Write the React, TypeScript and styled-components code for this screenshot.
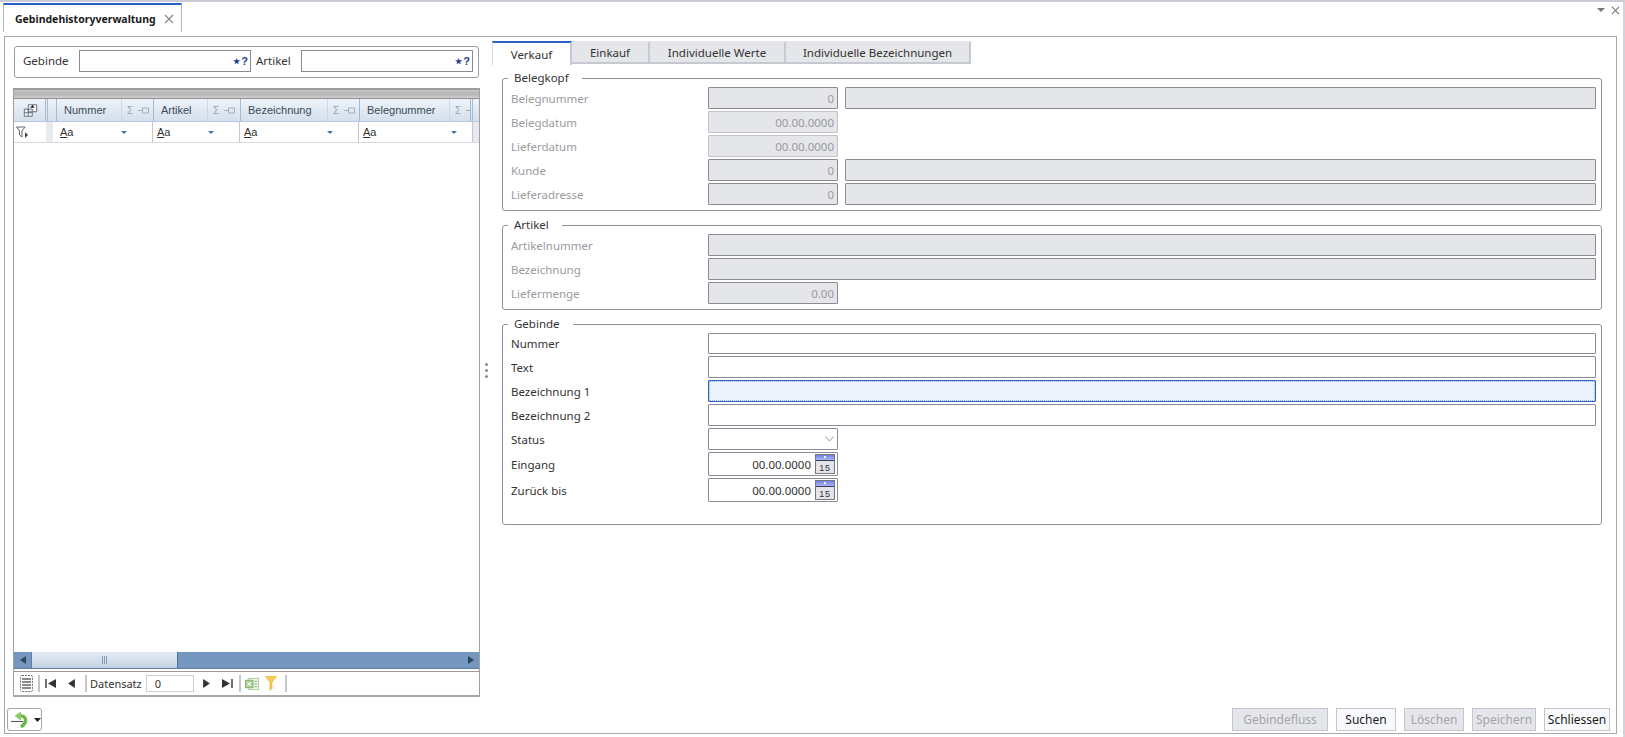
import React, { FC } from "react";
import styled, { createGlobalStyle } from "styled-components";

const GlobalStyle = createGlobalStyle`
	html, body {
		margin: 0;
		padding: 0;
		background: #fff;
	}
	* {
		box-sizing: border-box;
	}
`;

const uiFont = `"Noto Sans", "Open Sans", "Liberation Sans", sans-serif`;

const Window = styled.div`
	width: 1625px;
	height: 737px;
	display: flex;
	flex-direction: column;
	overflow: hidden;
	background: #fff;
	border-top: 2px solid #c9ccd6;
	border-right: 2px solid #d4d5da;
	font-family: ${uiFont};
	font-size: 11.5px;
	color: #333;
`;

const TabStrip = styled.div`
	height: 34px;
	flex: none;
	display: flex;
	justify-content: space-between;
	padding: 1px 0 0 3px;
`;

const DocTab = styled.div`
	width: 179px;
	height: 29px;
	display: flex;
	align-items: center;
	gap: 8px;
	padding-left: 11px;
	border: 1px solid #b5b8c0;
	border-top: 2px solid #2a5fc4;
	border-bottom: none;
	font-weight: 700;
	font-size: 10.5px;
	color: #1a1a1a;
`;

const WindowControls = styled.div`
	display: flex;
	align-items: center;
	height: 12px;
	gap: 6px;
	padding-right: 3px;
	margin-top: 1px;
`;

const Frame = styled.div`
	flex: none;
	height: 698px;
	margin: 0 6px 0 4px;
	border: 1px solid #a8a9ad;
	display: flex;
	flex-direction: column;
`;

const Main = styled.div`
	height: 667px;
	flex: none;
	display: flex;
`;

const LeftPane = styled.div`
	width: 475px;
	flex: none;
	padding: 9px 0 0 8px;
	display: flex;
	flex-direction: column;
	align-items: flex-start;
`;

const SearchBox = styled.div`
	width: 465px;
	height: 32px;
	margin-left: 1px;
	padding: 3px 5px 0 8px;
	display: flex;
	border: 1px solid #9b9ca5;
	border-radius: 3px;
	color: #333;
`;

const SearchLabel = styled.label<{ $width: number; $indent?: number }>`
	width: ${(p) => p.$width}px;
	flex: none;
	padding-left: ${(p) => p.$indent ?? 0}px;
	line-height: 22px;
`;

const SearchInput = styled.div`
	width: 172px;
	height: 22px;
	flex: none;
	display: flex;
	align-items: center;
	justify-content: flex-end;
	gap: 1px;
	padding-right: 2px;
	border: 1px solid #8a8b96;
	color: #1d3f94;
	font-family: "Liberation Sans", sans-serif;
	font-weight: 700;
	font-size: 11px;

	span {
		font-size: 8px;
	}
`;

const Grid = styled.div`
	width: 467px;
	height: 609px;
	margin-top: 10px;
	display: flex;
	flex-direction: column;
	border: 1px solid #a0a0a0;
	border-top: 2px solid #9b9ba0;
	border-bottom: 2px solid #a8a8a8;
	font-family: "Liberation Sans", sans-serif;
	font-size: 11px;
`;

const GroupBand = styled.div`
	height: 9px;
	flex: none;
	background: linear-gradient(#c8c8c8, #b4b4b4 50%, #d0d0d0);
	border-bottom: 1px solid #8f8f8f;
`;

const HeaderRow = styled.div`
	height: 23px;
	flex: none;
	display: flex;
	background: linear-gradient(#eef3f9, #dfe8f2 55%, #d4e0ed);
	border-bottom: 1px solid #b5c7dc;
	overflow: hidden;
`;

const CornerCell = styled.div`
	width: 42px;
	flex: none;
	display: flex;
	align-items: center;
	padding-left: 9px;
`;

const CornerGrip = styled.span`
	width: 3px;
	height: 100%;
	flex: none;
	margin-left: 7px;
	border-left: 1px solid #a9bbd0;
	border-right: 1px solid #a9bbd0;
`;

const HeaderCell = styled.div<{ $width: number; $last?: boolean }>`
	width: ${(p) => p.$width}px;
	flex: none;
	display: flex;
	align-items: center;
	padding-left: 7px;
	border-left: 1px solid #a3bad3;
	border-right: ${(p) => (p.$last ? "3px double #a3bad3" : "none")};
	color: #3a4a55;
`;

const HeaderTitle = styled.span`
	flex: 1;
`;

const HeaderTools = styled.span<{ $width: number }>`
	width: ${(p) => p.$width}px;
	flex: none;
	height: 100%;
	display: flex;
	align-items: center;
	gap: 5px;
	padding-left: 5px;
	border-left: 1px solid #cbd8e6;
	color: #9aa6b2;
	font-size: 10px;
	overflow: hidden;
`;

const FilterRow = styled.div`
	height: 21px;
	flex: none;
	display: flex;
	border-bottom: 1px solid #d6d9dd;
`;

const FilterCorner = styled.div`
	width: 42px;
	flex: none;
	display: flex;
	align-items: center;
	padding-left: 2px;
	background: linear-gradient(90deg, #fff 32px, #e7ebf0 32px, #e7ebf0 39px, #fff 39px);
`;

const FilterCell = styled.div<{ $width: number; $gap: number }>`
	width: ${(p) => p.$width}px;
	flex: none;
	display: flex;
	align-items: center;
	justify-content: space-between;
	padding: 0 ${(p) => p.$gap}px 0 4px;
	border-right: 1px solid #c4c8cc;
	color: #333;
	font-size: 11px;

	u {
		text-underline-offset: 1px;
	}
`;

const FilterEnd = styled.div`
	flex: 1;
	background: #e7ebf0;
`;

const GridBody = styled.div`
	flex: 1;
`;

const ScrollBar = styled.div`
	height: 17px;
	flex: none;
	display: flex;
	background: #7597bf;
	border-bottom: 1px solid #5e7ea6;
`;

const ScrollEnd = styled.div`
	width: 17px;
	flex: none;
	display: flex;
	align-items: center;
	justify-content: center;
`;

const ScrollThumb = styled.div`
	width: 147px;
	flex: none;
	display: flex;
	align-items: center;
	justify-content: center;
	gap: 1px;
	background: linear-gradient(#e2eaf3, #d5e1ed 50%, #c2d2e3);
	border-left: 1px solid #5e7ea6;
	border-right: 1px solid #4f6f98;

	i {
		width: 1px;
		height: 8px;
		background: #8a9bb0;
	}
`;

const ScrollSpacer = styled.div`
	flex: 1;
`;

const NavBar = styled.div`
	flex: none;
	height: 24px;
	display: flex;
	align-items: center;
	padding-left: 6px;
	border-top: 1px solid #9c9c9c;
	margin-top: 2px;
	font-family: ${uiFont};
	font-size: 11px;
	color: #333;
`;

const NavSeparator = styled.div<{ $left?: number; $right?: number }>`
	width: 2px;
	height: 17px;
	flex: none;
	margin: 0 ${(p) => p.$right ?? 5}px 0 ${(p) => p.$left ?? 5}px;
	background: #c6c6c6;
`;

const NavButton = styled.div<{ $width: number }>`
	width: ${(p) => p.$width}px;
	flex: none;
	display: flex;
	align-items: center;
	justify-content: center;
`;

const NavInput = styled.div`
	width: 48px;
	height: 17px;
	flex: none;
	margin: 0 3px 0 4px;
	padding-left: 8px;
	line-height: 16px;
	border: 1px solid #cfcfcf;
`;

const Splitter = styled.div`
	width: 12px;
	flex: none;
	display: flex;
	flex-direction: column;
	align-items: center;
	justify-content: center;
	gap: 3px;
	padding-left: 1px;

	i {
		width: 3px;
		height: 3px;
		border-radius: 50%;
		background: #8b8b8b;
	}
`;

const RightPane = styled.div`
	flex: 1;
	padding: 4px 14px 0 0;
	min-width: 0;
`;

const TabBar = styled.div`
	display: flex;
	height: 24px;
	margin-bottom: 5px;
`;

const FormTab = styled.div<{ $width: number; $active?: boolean }>`
	width: ${(p) => p.$width}px;
	height: ${(p) => (p.$active ? 24 : 23)}px;
	flex: none;
	display: flex;
	align-items: center;
	justify-content: center;
	color: #333;
	background: ${(p) => (p.$active ? "#fff" : "#e5e6ea")};
	border-top: 2px solid ${(p) => (p.$active ? "#2a5fc4" : "#e5e6ea")};
	border-right: 2px solid #c6c9d1;
	border-bottom: ${(p) => (p.$active ? "none" : "2px solid #c6c9d1")};
	border-left: ${(p) => (p.$active ? "1px solid #d6d8dd" : "none")};
`;

const Group = styled.fieldset<{ $height: number }>`
	margin: 0 0 6px 10px;
	width: 1100px;
	height: ${(p) => p.$height}px;
	padding: 0 5px 0 8px;
	border: 1px solid #8f919b;
	border-radius: 3px;
	min-width: 0;
`;

const GroupTitle = styled.legend`
	padding: 0 13px 0 6px;
	margin-left: -3px;
	line-height: 16px;
	color: #333;
`;

const Rows = styled.div`
	display: flex;
	flex-direction: column;
	padding-top: 1px;
`;

const Row = styled.div<{ $height?: number }>`
	display: flex;
	align-items: center;
	height: ${(p) => p.$height ?? 22}px;
	margin-bottom: 2px;
`;

const FieldLabel = styled.label<{ $disabled?: boolean }>`
	width: 197px;
	flex: none;
	color: ${(p) => (p.$disabled ? "#9a9aa0" : "#333")};
`;

const Field = styled.div<{ $disabled?: boolean; $soft?: boolean; $wide?: boolean; $focus?: boolean }>`
	height: 100%;
	flex: ${(p) => (p.$wide ? "1" : "none")};
	width: ${(p) => (p.$wide ? "auto" : "130px")};
	margin-right: ${(p) => (p.$wide ? "0" : "7px")};
	display: flex;
	align-items: center;
	justify-content: flex-end;
	padding-right: 3px;
	background: ${(p) => (p.$disabled ? "#e5e6ea" : p.$focus ? "#edf3fc" : "#fff")};
	border: 1px solid ${(p) => (p.$focus ? "#2a62c8" : p.$soft ? "#c2c3c9" : "#8a8b96")};
	border-radius: 1px;
	color: ${(p) => (p.$disabled ? "#9a9aa0" : "#333")};
	outline: ${(p) => (p.$focus ? "1px dotted #9fb0cc" : "none")};
	outline-offset: -2px;
`;

const CalendarButton = styled.span`
	display: flex;
	margin-left: 4px;
	margin-right: -1px;
`;

const Footer = styled.div`
	flex: 1;
	display: flex;
	align-items: flex-start;
	justify-content: space-between;
	padding: 4px 6px 0 2px;
`;

const BackButton = styled.div`
	width: 35px;
	height: 23px;
	display: flex;
	align-items: center;
	gap: 4px;
	padding-left: 3px;
	border: 1px solid #a5a5aa;
	border-radius: 3px;
`;

const ButtonBar = styled.div`
	display: flex;
	gap: 8px;
`;

const ActionButton = styled.button<{ $width: number }>`
	width: ${(p) => p.$width}px;
	height: 23px;
	padding: 0;
	font-family: ${uiFont};
	font-size: 12px;
	color: #1a1a1a;
	background: #f8f9fc;
	border: 1px solid #c3c6cf;

	&:disabled {
		color: #a3a4ab;
		background: #e5e6ea;
	}
`;

const Close: FC<{ size: number; color: string }> = ({ size, color }) => (
	<svg width={size} height={size} viewBox="0 0 10 10">
		<path d="M1 1 L9 9 M9 1 L1 9" stroke={color} strokeWidth="1.2" fill="none" />
	</svg>
);

const Triangle: FC<{ dir: "left" | "right"; color?: string; size?: number }> = ({ dir, color = "#333", size = 8 }) => (
	<svg width={size} height={size} viewBox="0 0 8 8">
		<path d={dir === "left" ? "M7 0 V8 L1 4 Z" : "M1 0 V8 L7 4 Z"} fill={color} />
	</svg>
);

const DropArrow: FC = () => (
	<svg width="6" height="3" viewBox="0 0 6 3">
		<path d="M0 0 H6 L3 3 Z" fill="#3f74b5" />
	</svg>
);

const Pin: FC = () => (
	<svg width="11" height="7" viewBox="0 0 11 7" style={{ flex: "none" }}>
		<path d="M0 3.5 H4 M4.5 1 H10.5 V6 H4.5 Z" stroke="#a2adb9" fill="none" />
	</svg>
);

const ColumnChooser: FC = () => (
	<svg width="15" height="15" viewBox="0 0 17 16" style={{ flex: "none" }}>
		<path d="M6 1.5 H15.5 V9.5 H6 Z M1.5 6.5 H10.5 V14.5 H1.5 Z M1.5 10.5 H10.5 M6 6.5 V14.5" stroke="#5b6470" fill="#f5f7fa" />
		<path d="M8 5 L11 1.5 L13 5 Z" fill="#222" />
	</svg>
);

const FunnelPlay: FC = () => (
	<svg width="13" height="13" viewBox="0 0 13 13">
		<path d="M0.5 1 H9 L6 5 V11 L3.5 9 V5 Z" stroke="#5c6470" fill="#fff" />
		<path d="M9 6 L12 9 L9 12 Z" fill="#444" />
	</svg>
);

const RecordsIcon: FC = () => (
	<svg width="13" height="17" viewBox="0 0 13 17">
		<rect x="0.5" y="0.5" width="12" height="16" rx="1.5" fill="none" stroke="#777" strokeDasharray="2 1" />
		<path d="M2 4 H11 M2 7 H11 M2 10 H11 M2 13 H11" stroke="#666" strokeWidth="1.6" />
	</svg>
);

const FirstIcon: FC = () => (
	<svg width="12" height="9" viewBox="0 0 12 9">
		<path d="M1 0 V9" stroke="#333" strokeWidth="1.4" />
		<path d="M11 0 V9 L3 4.5 Z" fill="#333" />
	</svg>
);

const LastIcon: FC = () => (
	<svg width="12" height="9" viewBox="0 0 12 9">
		<path d="M11 0 V9" stroke="#333" strokeWidth="1.4" />
		<path d="M1 0 V9 L9 4.5 Z" fill="#333" />
	</svg>
);

const ExcelIcon: FC = () => (
	<svg width="14" height="14" viewBox="0 0 15 15">
		<rect x="3.5" y="1.5" width="11" height="12" fill="#f1f7ec" stroke="#a8cc96" />
		<rect x="0.5" y="3.5" width="8" height="8" fill="#a3cd92" stroke="#84b573" />
		<path d="M2.5 5.5 L6.5 9.5 M6.5 5.5 L2.5 9.5" stroke="#fff" strokeWidth="1.2" />
		<path d="M10 4.5 H13 M10 7.5 H13 M10 10.5 H13" stroke="#86b673" strokeWidth="1.2" />
	</svg>
);

const FunnelIcon: FC = () => (
	<svg width="12" height="15" viewBox="0 0 12 15">
		<path d="M0.5 0.5 H11.5 L7 6 V12 L5 14.5 V6 Z" fill="#f8cb4a" stroke="#eab52c" strokeWidth="0.7" />
		<path d="M7.5 9 L11 12 L7 14 Z" fill="#eeeeee" />
	</svg>
);

const BackIcon: FC = () => (
	<svg width="19" height="18" viewBox="0 0 19 18">
		<path d="M9 5 C14 4 18 10 10 16" stroke="#6ab848" strokeWidth="3.4" fill="none" />
		<path d="M10 0.5 L3.5 5 L10 9.5 Z" fill="#86cc62" />
		<path d="M0 10.5 H12" stroke="#555" strokeWidth="1.1" fill="none" />
	</svg>
);

const Chevron: FC = () => (
	<svg width="9" height="6" viewBox="0 0 9 6">
		<path d="M0.5 0.5 L4.5 5 L8.5 0.5" stroke="#9a9aa0" fill="none" />
	</svg>
);

const CalendarIcon: FC = () => (
	<svg width="20" height="20" viewBox="0 0 20 20">
		<defs>
			<linearGradient id="calTop" x1="0" y1="0" x2="0" y2="1">
				<stop offset="0" stopColor="#6f80ea" />
				<stop offset="1" stopColor="#aab6f6" />
			</linearGradient>
		</defs>
		<rect x="0.5" y="0.5" width="19" height="19" fill="#e3e3ea" stroke="#77777f" />
		<rect x="1" y="1" width="18" height="5" fill="url(#calTop)" />
		<rect x="9" y="2" width="2" height="2" fill="#fff" />
		<rect x="1" y="6" width="18" height="1" fill="#3d3d55" />
		<text x="10" y="16.5" textAnchor="middle" fontFamily="Liberation Sans, sans-serif" fontSize="9" letterSpacing="0.8" fill="#333">
			15
		</text>
	</svg>
);

const columns = [
	{ title: "Nummer", width: 97, tools: 32, gap: 25 },
	{ title: "Artikel", width: 87, tools: 33, gap: 25 },
	{ title: "Bezeichnung", width: 119, tools: 32, gap: 25 },
	{ title: "Belegnummer", width: 114, tools: 21, gap: 15 },
];

const Wide: FC<{ disabled?: boolean; focus?: boolean }> = ({ disabled, focus }) => <Field $wide $disabled={disabled} $focus={focus} />;

export default function App() {
	return (
		<Window>
			<GlobalStyle />
			<TabStrip>
				<DocTab>
					Gebindehistoryverwaltung
					<Close size={10} color="#888" />
				</DocTab>
				<WindowControls>
					<svg width="8" height="4" viewBox="0 0 8 4">
						<path d="M0 0 H8 L4 4 Z" fill="#777" />
					</svg>
					<Close size={9} color="#777" />
				</WindowControls>
			</TabStrip>
			<Frame>
				<Main>
					<LeftPane>
						<SearchBox>
							<SearchLabel $width={56}>Gebinde</SearchLabel>
							<SearchInput>
								<span>★</span>?
							</SearchInput>
							<SearchLabel $width={50} $indent={5}>
								Artikel
							</SearchLabel>
							<SearchInput>
								<span>★</span>?
							</SearchInput>
						</SearchBox>
						<Grid>
							<GroupBand />
							<HeaderRow>
								<CornerCell>
									<ColumnChooser />
									<CornerGrip />
								</CornerCell>
								{columns.map((c, i) => (
									<HeaderCell key={c.title} $width={c.width} $last={i === columns.length - 1}>
										<HeaderTitle>{c.title}</HeaderTitle>
										<HeaderTools $width={c.tools}>
											Σ <Pin />
										</HeaderTools>
									</HeaderCell>
								))}
							</HeaderRow>
							<FilterRow>
								<FilterCorner>
									<FunnelPlay />
								</FilterCorner>
								{columns.map((c) => (
									<FilterCell key={c.title} $width={c.width} $gap={c.gap}>
										<span>
											<u>A</u>a
										</span>
										<DropArrow />
									</FilterCell>
								))}
								<FilterEnd />
							</FilterRow>
							<GridBody />
							<ScrollBar>
								<ScrollEnd>
									<Triangle dir="left" color="#2f4660" />
								</ScrollEnd>
								<ScrollThumb>
									<i />
									<i />
									<i />
								</ScrollThumb>
								<ScrollSpacer />
								<ScrollEnd>
									<Triangle dir="right" color="#2f4660" />
								</ScrollEnd>
							</ScrollBar>
							<NavBar>
								<RecordsIcon />
								<NavSeparator />
								<NavButton $width={12}>
									<FirstIcon />
								</NavButton>
								<NavButton $width={28}>
									<Triangle dir="left" size={9} />
								</NavButton>
								<NavSeparator $left={0} $right={3} />
								Datensatz
								<NavInput>0</NavInput>
								<NavButton $width={20}>
									<Triangle dir="right" size={9} />
								</NavButton>
								<NavButton $width={20}>
									<LastIcon />
								</NavButton>
								<NavSeparator $left={2} $right={4} />
								<NavButton $width={15}>
									<ExcelIcon />
								</NavButton>
								<NavButton $width={22}>
									<FunnelIcon />
								</NavButton>
								<NavSeparator $left={3} />
							</NavBar>
						</Grid>
					</LeftPane>
					<Splitter>
						<i />
						<i />
						<i />
					</Splitter>
					<RightPane>
						<TabBar>
							<FormTab $width={80} $active>
								Verkauf
							</FormTab>
							<FormTab $width={78}>Einkauf</FormTab>
							<FormTab $width={136}>Individuelle Werte</FormTab>
							<FormTab $width={185}>Individuelle Bezeichnungen</FormTab>
						</TabBar>
						<Group $height={141}>
							<GroupTitle>Belegkopf</GroupTitle>
							<Rows>
								<Row>
									<FieldLabel $disabled>Belegnummer</FieldLabel>
									<Field $disabled>0</Field>
									<Wide disabled />
								</Row>
								<Row>
									<FieldLabel $disabled>Belegdatum</FieldLabel>
									<Field $disabled $soft>
										00.00.0000
									</Field>
								</Row>
								<Row>
									<FieldLabel $disabled>Lieferdatum</FieldLabel>
									<Field $disabled $soft>
										00.00.0000
									</Field>
								</Row>
								<Row>
									<FieldLabel $disabled>Kunde</FieldLabel>
									<Field $disabled>0</Field>
									<Wide disabled />
								</Row>
								<Row>
									<FieldLabel $disabled>Lieferadresse</FieldLabel>
									<Field $disabled>0</Field>
									<Wide disabled />
								</Row>
							</Rows>
						</Group>
						<Group $height={93}>
							<GroupTitle>Artikel</GroupTitle>
							<Rows>
								<Row>
									<FieldLabel $disabled>Artikelnummer</FieldLabel>
									<Wide disabled />
								</Row>
								<Row>
									<FieldLabel $disabled>Bezeichnung</FieldLabel>
									<Wide disabled />
								</Row>
								<Row>
									<FieldLabel $disabled>Liefermenge</FieldLabel>
									<Field $disabled>0.00</Field>
								</Row>
							</Rows>
						</Group>
						<Group $height={209}>
							<GroupTitle>Gebinde</GroupTitle>
							<Rows>
								<Row $height={21}>
									<FieldLabel>Nummer</FieldLabel>
									<Wide />
								</Row>
								<Row>
									<FieldLabel>Text</FieldLabel>
									<Wide />
								</Row>
								<Row>
									<FieldLabel>Bezeichnung 1</FieldLabel>
									<Wide focus />
								</Row>
								<Row>
									<FieldLabel>Bezeichnung 2</FieldLabel>
									<Wide />
								</Row>
								<Row>
									<FieldLabel>Status</FieldLabel>
									<Field>
										<Chevron />
									</Field>
								</Row>
								<Row $height={24}>
									<FieldLabel>Eingang</FieldLabel>
									<Field>
										00.00.0000
										<CalendarButton>
											<CalendarIcon />
										</CalendarButton>
									</Field>
								</Row>
								<Row $height={24}>
									<FieldLabel>Zurück bis</FieldLabel>
									<Field>
										00.00.0000
										<CalendarButton>
											<CalendarIcon />
										</CalendarButton>
									</Field>
								</Row>
							</Rows>
						</Group>
					</RightPane>
				</Main>
				<Footer>
					<BackButton>
						<BackIcon />
						<svg width="7" height="4" viewBox="0 0 7 4">
							<path d="M0 0 H7 L3.5 4 Z" fill="#222" />
						</svg>
					</BackButton>
					<ButtonBar>
						<ActionButton $width={96} disabled>
							Gebindefluss
						</ActionButton>
						<ActionButton $width={60}>Suchen</ActionButton>
						<ActionButton $width={60} disabled>
							Löschen
						</ActionButton>
						<ActionButton $width={64} disabled>
							Speichern
						</ActionButton>
						<ActionButton $width={66}>Schliessen</ActionButton>
					</ButtonBar>
				</Footer>
			</Frame>
		</Window>
	);
}
